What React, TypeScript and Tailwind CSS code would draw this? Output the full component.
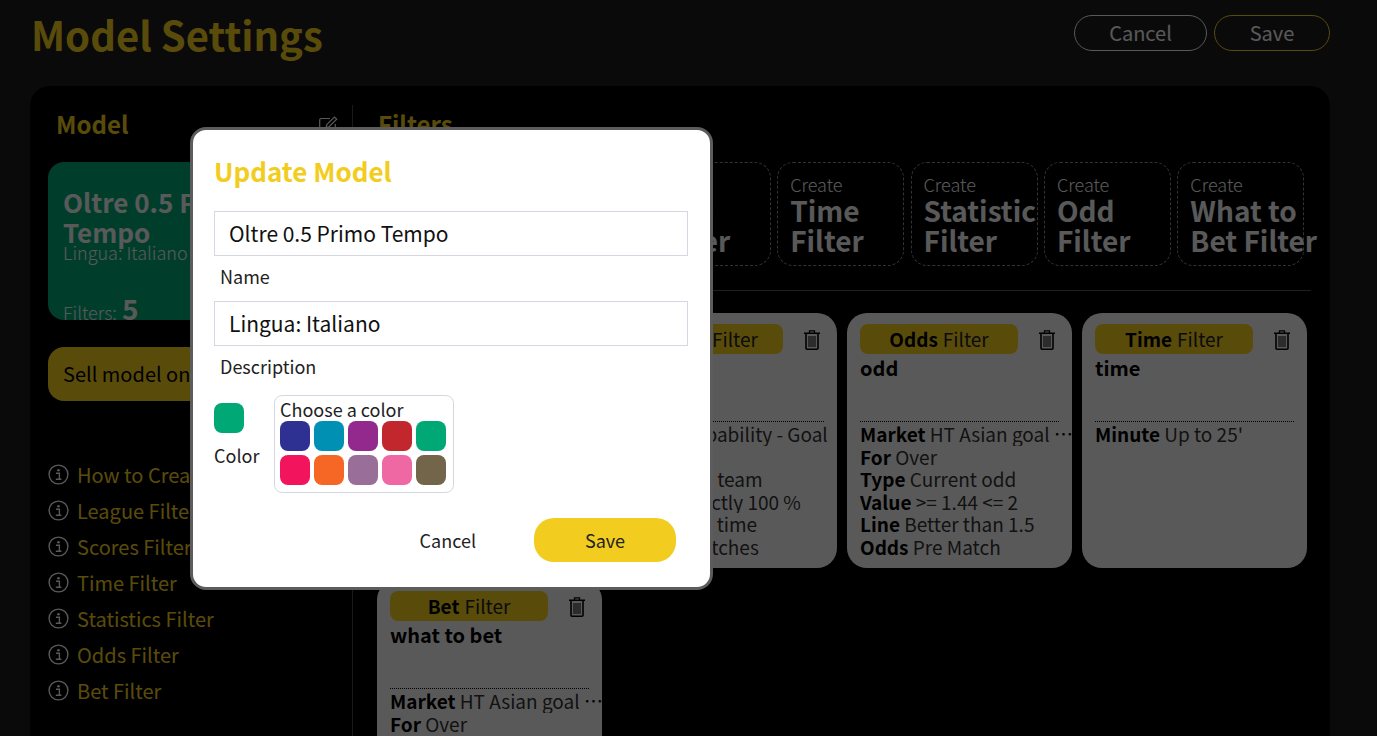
import React from "react";

const font = { fontFamily: '"Noto Sans CJK JP", "Noto Sans", sans-serif' };

function Info() {
  return (
    <svg width="21" height="21" viewBox="0 0 21 21" fill="none" className="shrink-0">
      <circle cx="10.5" cy="10.5" r="9.4" stroke="#f2f2f2" strokeWidth="1.4" />
      <circle cx="10.5" cy="6.2" r="1.3" fill="#f2f2f2" />
      <path d="M8 9.2h3.4v5.8M7.8 15.3h5.6" stroke="#f2f2f2" strokeWidth="1.4" />
    </svg>
  );
}

function Trash() {
  return (
    <svg width="18" height="21" viewBox="0 0 18 21" fill="none" stroke="#000" strokeWidth="1.3" className="shrink-0">
      <path d="M1 4.2h16" strokeWidth="1.6" />
      <path d="M6.5 4V1.8h5V4" />
      <path d="M3 5v14.2a1 1 0 0 0 1 1h10a1 1 0 0 0 1-1V5" strokeWidth="1.6" />
      <path d="M6 7v11M8 7v11M10 7v11M12 7v11" strokeWidth="1" />
    </svg>
  );
}

function Edit() {
  return (
    <svg width="19" height="18" viewBox="0 0 19 18" fill="none" stroke="#f2f2f2" strokeWidth="1.2">
      <path d="M11 2.5H2.2a1.5 1.5 0 0 0-1.5 1.5v11a1.5 1.5 0 0 0 1.5 1.5h12.6a1.5 1.5 0 0 0 1.5-1.5V8" />
      <path d="M7 11.5l.8-3L15.5 1l2.2 2.2-7.7 7.6z" />
    </svg>
  );
}

function CreateBtn({ name, line1, line2 }: { name?: string; line1: string; line2: string }) {
  return (
    <div className="w-[127px] h-[104px] shrink-0 rounded-2xl border border-dashed border-[#8a8a8a] pl-[12px] pt-[9px] text-[#f2f2f2] whitespace-nowrap">
      <div className="text-[18px] leading-[24px] font-light">Create</div>
      <div className="text-[28px] leading-[30px] font-bold -mt-[1px]">{line1}</div>
      <div className="text-[28px] leading-[30px] font-bold">{line2}</div>
    </div>
  );
}

function Row({ k, v }: { k: string; v: string }) {
  return (
    <div className="text-[19px] leading-[22.5px] whitespace-nowrap overflow-hidden text-ellipsis w-[214px] -mr-[6px]">
      <span className="font-bold text-black">{k}</span> <span className="text-[#333]">{v}</span>
    </div>
  );
}

function FilterCard({ title, sub, name, rows, pill }: { title: string; sub?: string; name: string; rows: [string, string][]; pill?: number }) {
  return (
    <div className="h-[255px] rounded-[20px] bg-[#f2f2f2] pl-[13px] pr-[13px] pt-[11px] overflow-hidden text-black">
      <div className="flex items-center justify-between">
        <div className="h-[30px] w-[158px] rounded-lg bg-[#f2cd20] flex items-center justify-center text-[19px] gap-[5px]">
          <span className="font-bold">{title}</span> <span className="text-[#222]">Filter</span>
        </div>
        <div className="mr-[3px] mt-[1px]"><Trash /></div>
      </div>
      <div className="text-[20px] font-bold leading-[24px] mt-[2px] h-[64px]">{name}</div>
      <div className="border-t border-dotted border-black mt-[1px] w-[199px] h-[1px]"></div>
      <div className="pt-[1px]">
        {rows.map(([k, v]) => (
          <Row key={k} k={k} v={v} />
        ))}
      </div>
    </div>
  );
}

const helps = ["How to Create a Model", "League Filter", "Scores Filter", "Time Filter", "Statistics Filter", "Odds Filter", "Bet Filter"];
const swatches = ["#2e3192", "#0090b4", "#93298c", "#c1272d", "#00a875", "#f2155e", "#f66725", "#996f99", "#ef68a4", "#736549"];

export default function App() {
  return (
    <div style={font} className="relative h-screen overflow-hidden bg-[#1b1b1b]">
      <div className="flex items-start justify-between pl-[31px] pr-[47px] h-[86px]">
        <h1 className="text-[40px] leading-[50px] font-bold text-[#f2cd20] mt-[9px]">Model Settings</h1>
        <div className="flex gap-[7px] mt-[15px]">
          <button className="w-[133px] h-[36px] rounded-full border border-[#f2f2f2] text-[#f2f2f2] text-[20px] leading-none">Cancel</button>
          <button className="w-[116px] h-[36px] rounded-full border border-[#f2cd20] text-[#f2f2f2] text-[20px] leading-none">Save</button>
        </div>
      </div>

      <div className="mx-[30px] w-[1300px] h-[700px] rounded-[20px] bg-black flex pt-[19px]">
        <div className="w-[323px] shrink-0 border-r border-[#444] pl-[18px] pr-[14px]">
          <div className="flex items-center justify-between pl-[8px] h-[38px]">
            <div className="text-[24px] font-bold text-[#f2cd20]">Model</div>
            <div className="mt-[2px]"><Edit /></div>
          </div>
          <div className="mt-[19px] h-[158px] rounded-2xl bg-[#00a875] pl-[15px] pt-[25px] text-[#f2f2f2]">
            <div className="text-[26px] font-bold leading-[30px]">Oltre 0.5 Primo Tempo</div>
            <div className="text-[18px] leading-[18px] font-light -mt-[4px]">Lingua: Italiano</div>
            <div className="mt-[31px] flex items-baseline gap-[5px] text-[18px] font-light">
              Filters: <span className="text-[28px] font-bold leading-[32px]">5</span>
            </div>
          </div>
          <div className="mt-[27px] h-[54px] rounded-2xl bg-[#f2cd20] pl-[15px] flex items-center text-[20px] text-black">Sell model on Marketplace</div>
          <div className="mt-[60px] flex flex-col gap-[9px]">
            {helps.map((h) => (
              <div key={h} className="flex items-center gap-[8px] h-[27px] text-[20px] text-[#f2cd20] whitespace-nowrap">
                <Info /> {h}
              </div>
            ))}
          </div>
        </div>

        <div className="flex-1 pl-[24px] pr-[19px] min-w-0">
          <div className="text-[24px] font-bold text-[#f2cd20] h-[38px] leading-[38px] pl-[1px]">Filters</div>
          <div className="mt-[19px] flex gap-[6.4px]">
            <CreateBtn line1="League" line2="Filter" />
            <CreateBtn line1="Score" line2="Filter" />
            <CreateBtn line1="Live" line2="Filter" />
            <CreateBtn line1="Time" line2="Filter" />
            <CreateBtn line1="Statistic" line2="Filter" />
            <CreateBtn line1="Odd" line2="Filter" />
            <CreateBtn line1="What to" line2="Bet Filter" />
          </div>
          <div className="mt-[24px] h-px bg-[#555] w-[934px]"></div>
          <div className="mt-[22px] grid grid-cols-[225px_225px_225px_225px] gap-x-[10px] gap-y-[12px]">
            <FilterCard title="League" name="league" rows={[["League", "Italy - Serie A"]]} />
            <FilterCard title="Match" name="stat" rows={[["Type", "Probability - Goal"], ["For", "Both"], ["Team", "Any team"], ["Value", "Exactly 100 %"], ["Time", "Half time"], ["Last", "5 matches"]]} />
            <FilterCard title="Odds" name="odd" rows={[["Market", "HT Asian goal line"], ["For", "Over"], ["Type", "Current odd"], ["Value", ">= 1.44 <= 2"], ["Line", "Better than 1.5"], ["Odds", "Pre Match"]]} />
            <FilterCard title="Time" name="time" rows={[["Minute", "Up to 25'"]]} />
            <FilterCard title="Bet" name="what to bet" rows={[["Market", "HT Asian goal line"], ["For", "Over"]]} />
          </div>
        </div>
      </div>

      <div className="absolute inset-0 bg-black/[.63]"></div>

      <div className="absolute left-[190px] top-[127px] w-[523px] h-[463px] rounded-[16px] border-[3px] border-[#5c5c5c] bg-white pl-[21px] pr-[22px] text-[#222]">
        <div className="text-[26px] font-bold text-[#f2cd20] leading-[36px] mt-[23px]">Update Model</div>
        <div className="mt-[22px] h-[45px] border border-[#d5d8e0] pl-[14px] flex items-center text-[21px] text-[#111]">Oltre 0.5 Primo Tempo</div>
        <div className="pl-[6px] text-[18px] leading-[24px] mt-[8px]">Name</div>
        <div className="mt-[13px] h-[45px] border border-[#d5d8e0] pl-[14px] flex items-center text-[21px] text-[#111]">Lingua: Italiano</div>
        <div className="pl-[6px] text-[18px] leading-[24px] mt-[8px]">Description</div>
        <div className="mt-[17px] flex items-start">
          <div className="w-[60px] pt-[8px]">
            <div className="w-[30px] h-[30px] rounded-lg bg-[#00a875]"></div>
            <div className="text-[18px] leading-[24px] mt-[10px]">Color</div>
          </div>
          <div className="w-[180px] h-[98px] rounded-lg border border-[#d5d8e0] pl-[5px] pt-[1px]">
            <div className="text-[18px] leading-[24px]">Choose a color</div>
            <div className="grid grid-cols-[30px_30px_30px_30px_30px] gap-x-[4px] gap-y-[4px]">
              {swatches.map((c) => (
                <div key={c} className="w-[30px] h-[30px] rounded-lg" style={{ backgroundColor: c }}></div>
              ))}
            </div>
          </div>
        </div>
        <div className="mt-[25px] flex items-center justify-end pr-[12px]">
          <button className="text-[18px] mr-[58px] text-[#222]">Cancel</button>
          <button className="w-[142px] h-[44px] rounded-[20px] bg-[#f2cd20] text-[18px] text-[#222]">Save</button>
        </div>
      </div>
    </div>
  );
}
